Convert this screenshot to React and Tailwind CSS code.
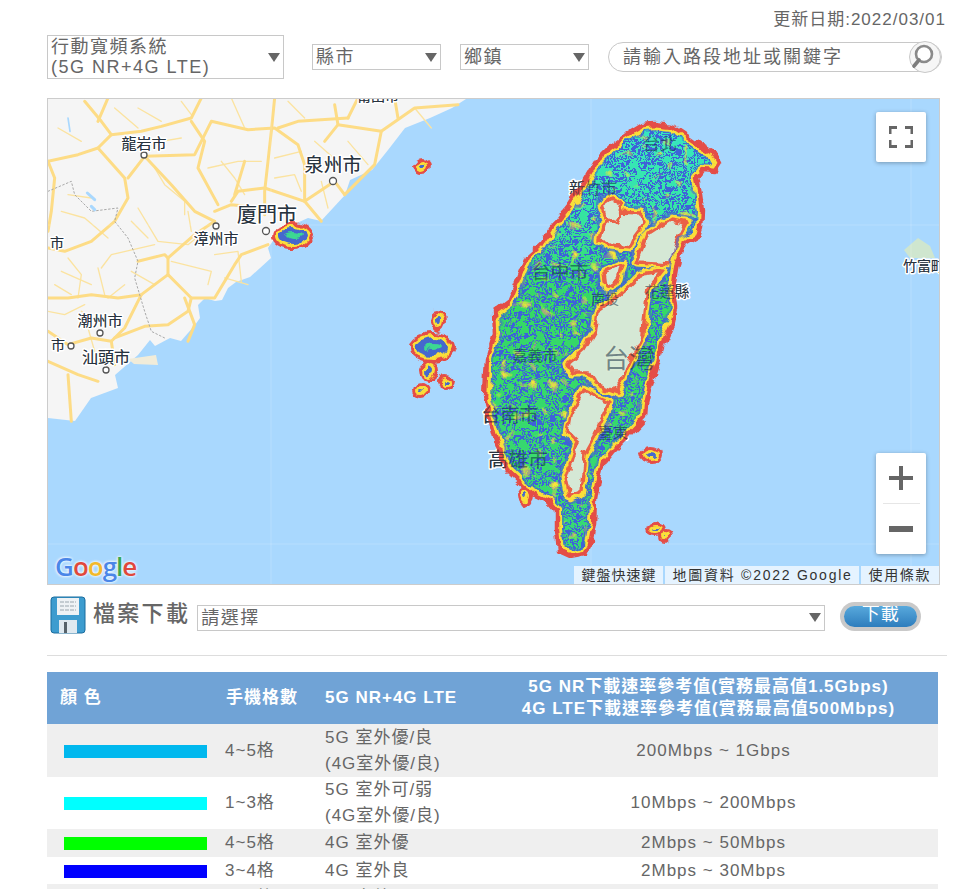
const FONT = "font-['Liberation_Sans','Noto_Sans_CJK_TC',sans-serif]";

// roads are traced in a 3x space over the map's top left corner
const MAJOR_ROADS = [
  "M110,10 L160,70 190,110 150,150 90,170 0,190",
  "M180,0 L150,70",
  "M150,150 L230,240 240,300 200,370 130,430 50,460 0,450",
  "M290,175 L240,240",
  "M290,175 L370,260 440,340 500,370",
  "M0,190 L20,240 10,340 0,400",
  "M290,175 L440,170 490,70 600,95 680,90 750,140 770,200 770,310",
  "M460,0 L430,60 340,85 280,100 190,110",
  "M430,70 L470,130 450,210 510,320",
  "M680,0 L670,100 650,280 650,350",
  "M550,310 L570,280 650,270 770,310 860,250 890,290",
  "M500,340 L550,320 650,330",
  "M900,60 L750,70 690,90",
  "M860,20 L870,80 830,130",
  "M500,370 L440,410 360,480 360,530 400,570 430,600 500,600 560,500 580,470 660,440",
  "M360,530 L280,590 230,690 190,730",
  "M200,720 L290,685 360,680 420,640 430,600",
  "M0,700 L60,740 130,720 190,730 200,800",
  "M0,790 L90,830 150,850",
  "M60,830 L70,970",
  "M0,600 L60,600 130,590 210,600 280,590",
  "M770,310 L820,370",
  "M270,490 L350,470 360,480",
  "M870,80 L1000,100 1100,30 1230,20",
  "M1000,100 L980,200 890,290",
  "M1050,60 L1040,0",
  "M900,60 L930,0",
  "M410,600 L440,680 420,730",
  "M590,190 L560,290",
];

const MINOR_ROADS = [
  "M270,30 L340,70", "M400,10 L430,50", "M550,0 L590,90", "M720,10 L770,60",
  "M320,210 L350,260 410,310 410,350", "M480,210 L570,190 640,190", "M520,190 L560,240 590,290",
  "M270,330 L330,430 420,440 470,400", "M60,480 L100,530 90,600", "M160,510 L190,470 320,440",
  "M150,510 L170,590", "M370,490 L490,520 480,560", "M500,470 L570,460 580,550", "M680,180 L760,160",
  "M680,240 L740,230 760,280", "M820,250 L840,330", "M40,340 L110,360 180,420",
  "M250,370 L300,420", "M0,640 L50,650 110,620", "M420,340 L430,400", "M120,690 L140,760",
  "M900,130 L960,200", "M800,130 L880,200", "M1100,30 L1150,90", "M40,520 L130,560", "M250,520 L320,560",
  "M30,90 L100,130", "M200,30 L270,90", "M340,130 L400,120", "M60,290 L130,300", "M580,380 L640,370",
  "M20,560 L70,590", "M180,600 L230,560", "M530,540 L600,560", "M100,640 L160,680",
];

const TW_OUTLINE = "M643,125 L655,124 L672,126 L690,138 L703,147 L712,152 L718,163 L713,171 L703,170 L697,178 L700,195 L702,210 L701,228 L699,234 L684,243 L678,258 L675,275 L673,290 L675,308 L672,323 L664,342 L657,365 L650,387 L646,405 L645,418 L627,437 L612,452 L603,463 L598,482 L595,500 L594,523 L590,545 L586,553 L570,556 L559,551 L557,530 L557,510 L550,502 L535,495 L523,485 L508,471 L500,452 L495,437 L490,418 L485,397 L486,375 L487,360 L495,333 L494,312 L510,300 L518,280 L527,257 L540,245 L553,227 L570,205 L587,177 L597,160 L610,147 L625,136 Z";

// patches of the central range with no coverage
const MOUNTAINS = [
  "M600,240 L603,226 L620,212 L640,213 L645,222 L636,234 L630,248 L612,246 Z",
  "M637,262 L647,235 L670,220 L687,223 L678,240 L672,264 Z",
  "M628,288 L642,274 L662,271 L648,288 L644,322 L643,334 L625,372 L617,392 L597,385 L588,372 L572,372 L567,365 L584,350 L594,333 L597,312 L614,300 Z",
  "M583,390 L610,402 L595,437 L585,455 L581,492 L570,497 L566,477 L577,442 L568,433 L571,416 Z",
  "M602,205 L612,198 L622,205 L616,222 L606,218 Z",
  "M604,272 L622,264 L618,280 L606,288 Z",
];

// off shore spots: [cx, cy, rx, ry]
const ISLETS = [
  [293, 236, 21, 14], [422, 166, 9, 8], [438, 321, 8, 11], [432, 347, 23, 15], [429, 371, 9, 11],
  [421, 390, 8, 7], [446, 382, 9, 8], [525, 496, 8, 9], [651, 455, 11, 8], [655, 529, 9, 7], [665, 536, 7, 7],
];

const LABELS = [
  { x: 144, y: 149, s: 15, t: "龍岩市" },
  { x: 333, y: 172, s: 19, t: "泉州市" },
  { x: 267, y: 222, s: 20, t: "廈門市" },
  { x: 216, y: 244, s: 15, t: "漳州市" },
  { x: 57, y: 248, s: 14, t: "市" },
  { x: 100, y: 326, s: 15, t: "潮州市" },
  { x: 58, y: 350, s: 14, t: "市" },
  { x: 106, y: 363, s: 16, t: "汕頭市" },
  { x: 378, y: 101, s: 14, t: "莆田市" },
  { x: 924, y: 271, s: 14, t: "竹富町" },
  { x: 593, y: 194, s: 16, t: "新竹市" },
  { x: 660, y: 150, s: 17, t: "台北" },
  { x: 560, y: 279, s: 19, t: "台中市" },
  { x: 667, y: 297, s: 15, t: "花蓮縣" },
  { x: 605, y: 304, s: 14, t: "南投" },
  { x: 629, y: 368, s: 26, t: "台灣" },
  { x: 535, y: 361, s: 15, t: "嘉義市" },
  { x: 510, y: 422, s: 19, t: "台南市" },
  { x: 518, y: 467, s: 20, t: "高雄市" },
  { x: 613, y: 438, s: 15, t: "臺東" },
];

const CITY_DOTS = [
  [144, 155, 3], [333, 181, 3.5], [266, 231, 3.5], [216, 226, 3], [100, 333, 3], [71, 346, 3], [106, 370, 3],
];

const RATES = [
  { color: "bg-[#00b8ee]", bars: "4~5格", net: ["5G 室外優/良", "(4G室外優/良)"], speed: "200Mbps ~ 1Gbps", row: "h-[53px]" },
  { color: "bg-[#00ffff]", bars: "1~3格", net: ["5G 室外可/弱", "(4G室外優/良)"], speed: "10Mbps ~ 200Mbps", row: "h-[52px]" },
  { color: "bg-[#00ff00]", bars: "4~5格", net: ["4G 室外優"], speed: "2Mbps ~ 50Mbps", row: "h-[28px]" },
  { color: "bg-[#0000ff]", bars: "3~4格", net: ["4G 室外良"], speed: "2Mbps ~ 30Mbps", row: "h-[27px]" },
  { color: "bg-[#ffff00]", bars: "2~3格", net: ["4G 室外可"], speed: "1Mbps ~ 10Mbps", row: "h-[28px]" },
];

const Caret = () => (
  <span className="w-0 h-0 border-x-[6px] border-x-transparent border-t-[9px] border-t-[#666]" />
);

const Dropdown = ({ className, children }) => (
  <div className={`flex items-center justify-between border border-[#c8c8c8] bg-white px-[3px] text-[18px] leading-[20px] tracking-[1.5px] text-[#666] ${className}`}>
    <div>{children}</div>
    <Caret />
  </div>
);

const SaveIcon = () => (
  <svg className="w-[36px] h-[38px]" viewBox="0 0 36 38">
    <rect x="1" y="1" width="34" height="36" rx="3" fill="#3d9ccf" stroke="#1b6c9e" strokeWidth="1" />
    <rect x="7" y="2" width="22" height="17" fill="#eef2f5" />
    <path d="M10 6h16M10 10h16M10 14h16" stroke="#9aa6ae" strokeWidth="1" strokeDasharray="4 1" />
    <rect x="9" y="24" width="18" height="13" fill="#dfe9f0" />
    <rect x="14" y="26" width="3" height="11" fill="#56626a" />
  </svg>
);

const SearchIcon = () => (
  <svg className="w-[32px] h-[32px]" viewBox="0 0 32 32">
    <circle cx="16" cy="16" r="15.5" fill="#f6f6f6" stroke="#c8c8c8" />
    <circle cx="15" cy="13" r="8" fill="#fff" stroke="#8a8a8a" strokeWidth="2.6" />
    <path d="M10 19 5 25" stroke="#7c7c7c" strokeWidth="3.6" strokeLinecap="round" />
  </svg>
);

const MapBase = () => (
  <svg className="block w-full h-full" viewBox="48 99 891 485">
    <defs>
      <clipPath id="tw">
        <path d={TW_OUTLINE} />
      </clipPath>
      <linearGradient id="cover" x1="0" y1="0" x2="0" y2="1">
        <stop offset="0" stopColor="#30e8c0" />
        <stop offset="0.2" stopColor="#2ee6a0" />
        <stop offset="0.4" stopColor="#2ed85c" />
        <stop offset="1" stopColor="#30d870" />
      </linearGradient>
      <filter id="blueNoise" x="0" y="0" width="100%" height="100%" colorInterpolationFilters="sRGB">
        <feTurbulence type="fractalNoise" baseFrequency="0.095" numOctaves="2" seed="7" />
        <feColorMatrix values="0 0 0 0 0.22  0 0 0 0 0.36  0 0 0 0 0.84  3 0 0 0 -1" />
        <feComponentTransfer>
          <feFuncA type="discrete" tableValues="0 0 1 1 0 0 1 1 0 0 1 1 0" />
        </feComponentTransfer>
        <feGaussianBlur stdDeviation="0.6" />
      </filter>
      <filter id="yellowNoise" x="0" y="0" width="100%" height="100%" colorInterpolationFilters="sRGB">
        <feTurbulence type="fractalNoise" baseFrequency="0.1" numOctaves="1" seed="21" />
        <feColorMatrix values="0 0 0 0 1  0 0 0 0 0.9  0 0 0 0 0.18  0 6 0 0 -3.75" />
        <feGaussianBlur stdDeviation="0.5" />
      </filter>
      <filter id="wiggle" filterUnits="userSpaceOnUse" x="48" y="99" width="891" height="485" colorInterpolationFilters="sRGB">
        <feTurbulence type="fractalNoise" baseFrequency="0.09" numOctaves="2" seed="11" result="n" />
        <feDisplacementMap in="SourceGraphic" in2="n" scale="9" xChannelSelector="R" yChannelSelector="G" />
        <feGaussianBlur stdDeviation="0.5" />
      </filter>
    </defs>

    <rect x="48" y="99" width="891" height="485" fill="#a9d8fe" />

    {/* mainland */}
    <path
      d="M48,99 L466,99 L452,108 L430,118 L405,128 L388,150 L372,170 L350,180 L345,195 L333,208 L321,221 L308,218 L290,226 L275,238 L268,248 L271,258 L250,277 L236,282 L228,288 L222,300 L215,301 L205,298 L198,305 L200,318 L195,325 L181,341 L170,338 L155,346 L150,340 L138,355 L115,375 L118,388 L91,398 L75,421 L48,418 Z"
      fill="#f5f5f5"
    />
    <path d="M128,359 L156,355 L158,365 L134,364 Z" fill="#f1ecd9" />
    <path d="M904,250 L918,238 L930,246 L935,258 L910,258 Z" fill="#cfe6cf" />

    <g transform="translate(48 98) scale(0.3333)" fill="none" strokeLinejoin="round" strokeLinecap="round">
      {MINOR_ROADS.map((d) => (
        <path key={d} d={d} stroke="#fbe3a0" strokeWidth="4" />
      ))}
      {MAJOR_ROADS.map((d) => (
        <path key={d} d={d} stroke="#fddc86" strokeWidth="9" />
      ))}
      <path d="M0,280 L70,250 80,290 130,340 210,330 200,370 240,420 270,490 260,540 290,640 310,700 350,720" stroke="#a8a8a8" strokeWidth="3" strokeDasharray="5 7" />
      <path d="M60,60 L66,100" stroke="#a9d8fe" strokeWidth="5" />
      <path d="M118,285 L140,305 M130,325 L140,335" stroke="#a9d8fe" strokeWidth="9" />
    </g>

    {/* faint tile seams */}
    <path d="M271 99V584M591 99V584M911 99V584M48 225H939M48 544H939" stroke="#fff" strokeOpacity="0.18" />

    {CITY_DOTS.map(([cx, cy, r]) => (
      <circle key={`${cx}-${cy}`} cx={cx} cy={cy} r={r} fill="#fff" stroke="#555" strokeWidth="1.3" />
    ))}

    {LABELS.map((l) => (
      <text
        key={l.t + l.x}
        x={l.x}
        y={l.y}
        fontSize={l.s}
        textAnchor="middle"
        fill="#3c3c3c"
        stroke="#fff"
        strokeWidth="3"
        strokeLinejoin="round"
        paintOrder="stroke"
        fontFamily="'Noto Sans CJK TC', sans-serif"
      >
        {l.t}
      </text>
    ))}

    {/* coverage overlay */}
    <g opacity="0.94" filter="url(#wiggle)">
      {ISLETS.map(([cx, cy, rx, ry]) => (
        <ellipse key={`r${cx}${cy}`} cx={cx} cy={cy} rx={rx} ry={ry} fill="#e8453c" />
      ))}
      {ISLETS.map(([cx, cy, rx, ry]) => (
        <ellipse key={`y${cx}${cy}`} cx={cx} cy={cy} rx={Math.max(rx - 3, 1)} ry={Math.max(ry - 3, 1)} fill="#ffe02e" />
      ))}
      {ISLETS.map(([cx, cy, rx, ry]) => (
        <ellipse key={`b${cx}${cy}`} cx={cx} cy={cy} rx={Math.max(rx - 6, 1)} ry={Math.max(ry - 6, 1)} fill="#3f62cc" />
      ))}
      <ellipse cx="293" cy="235" rx="9" ry="3" fill="#36d98c" />
      <ellipse cx="433" cy="347" rx="8" ry="3" fill="#36d98c" />

      <g clipPath="url(#tw)">
        <rect x="480" y="120" width="245" height="440" fill="url(#cover)" />
        <rect x="480" y="120" width="245" height="440" filter="url(#blueNoise)" />
        <rect x="480" y="120" width="245" height="440" filter="url(#yellowNoise)" />
        <g strokeLinejoin="round">
          {MOUNTAINS.map((d) => (
            <path key={`b${d}`} d={d} fill="none" stroke="#3f62cc" strokeWidth="14" opacity="0.7" />
          ))}
          {MOUNTAINS.map((d) => (
            <path key={`y${d}`} d={d} fill="none" stroke="#ffe02e" strokeWidth="9" />
          ))}
          {MOUNTAINS.map((d) => (
            <path key={`o${d}`} d={d} fill="#d8e9d3" stroke="#ef5a3c" strokeWidth="3.5" />
          ))}
        </g>
        <path d={TW_OUTLINE} fill="none" stroke="#3f62cc" strokeWidth="14" opacity="0.6" />
        <path d={TW_OUTLINE} fill="none" stroke="#ffe02e" strokeWidth="10" />
      </g>
      <path d={TW_OUTLINE} fill="none" stroke="#e8453c" strokeWidth="4.5" strokeLinejoin="round" />
    </g>

    {/* place names show through the overlay */}
    {LABELS.map((l) => (
      <text
        key={`over${l.t}${l.x}`}
        x={l.x}
        y={l.y}
        fontSize={l.s}
        textAnchor="middle"
        fill="#102a43"
        fillOpacity="0.5"
        fontFamily="'Noto Sans CJK TC', sans-serif"
      >
        {l.t}
      </text>
    ))}
  </svg>
);

const MapPanel = () => (
  <div className="relative h-[487px] border border-[#ccc] overflow-hidden">
    <MapBase />

    <button className="absolute top-[13px] right-[13px] w-[50px] h-[50px] flex items-center justify-center rounded-[2px] bg-white shadow-[0_1px_4px_rgba(0,0,0,0.3)]">
      <svg className="w-[24px] h-[22px]" viewBox="0 0 24 22" fill="none" stroke="#666" strokeWidth="3">
        <path d="M1 8V1.5H8M16 1.5H23V8M1 14V20.5H8M16 20.5H23V14" />
      </svg>
    </button>

    <div className="absolute top-[354px] right-[13px] w-[50px] h-[101px] flex flex-col items-center rounded-[2px] bg-white shadow-[0_1px_4px_rgba(0,0,0,0.3)]">
      <button className="h-[50px] w-full flex items-center justify-center">
        <svg className="w-[24px] h-[24px]" viewBox="0 0 24 24" fill="#666">
          <path d="M10 0h4v10h10v4H14v10h-4V14H0v-4h10z" />
        </svg>
      </button>
      <div className="w-[37px] h-px bg-[#e6e6e6]" />
      <button className="h-[50px] w-full flex items-center justify-center">
        <svg className="w-[24px] h-[6px]" viewBox="0 0 24 6" fill="#666">
          <rect width="24" height="6" />
        </svg>
      </button>
    </div>

    <div className="absolute left-[7px] bottom-[3px] flex font-['Open_Sans',sans-serif] text-[26px] leading-[30px] font-semibold tracking-[-1px] [text-shadow:0_0_3px_#fff,0_0_3px_#fff]">
      <span className="text-[#4a86e8]">G</span>
      <span className="text-[#e0483c]">o</span>
      <span className="text-[#f2b92c]">o</span>
      <span className="text-[#4a86e8]">g</span>
      <span className="text-[#35a853]">l</span>
      <span className="text-[#e0483c]">e</span>
    </div>

    <div className="absolute right-0 bottom-0 h-[18px] flex text-[14px] leading-[18px] text-[#333]">
      <span className="bg-white/70 tracking-[1px] pl-[7px] pr-[7px] mr-[2px]">鍵盤快速鍵</span>
      <span className="bg-white/70 tracking-[1.75px] pl-[7px] pr-[6px] mr-[2px]">地圖資料 ©2022 Google</span>
      <span className="bg-white/70 tracking-[1.6px] pl-[8px] pr-[8px]">使用條款</span>
    </div>
  </div>
);

const RateTable = () => (
  <table className="w-[891px] border-collapse table-fixed text-[17px] tracking-[1px] text-[#666]">
    <colgroup>
      <col className="w-[177px]" />
      <col className="w-[100px]" />
      <col className="w-[155px]" />
      <col />
    </colgroup>
    <thead>
      <tr className="h-[52px] bg-[#70a3d6] text-white font-bold leading-[22px]">
        <th className="pl-[13px] text-left font-bold">顏 色</th>
        <th className="pl-[2px] text-left font-bold">手機格數</th>
        <th className="pl-[1px] text-left font-bold">5G NR+4G LTE</th>
        <th className="font-bold">
          5G NR下載速率參考值(實務最高值1.5Gbps)
          <br />
          4G LTE下載速率參考值(實務最高值500Mbps)
        </th>
      </tr>
    </thead>
    <tbody>
      {RATES.map((r, i) => (
        <tr key={r.color} className={`${i % 2 === 0 ? "bg-[#efefef]" : "bg-white"} ${r.row} leading-[26px]`}>
          <td className="pl-[17px]">
            <div className={`w-[143px] h-[13px] mt-px ${r.color}`} />
          </td>
          <td className="pl-[1px]">{r.bars}</td>
          <td className="pl-[1px]">
            {r.net.map((line) => (
              <div key={line}>{line}</div>
            ))}
          </td>
          <td className="text-center pl-[10px]">{r.speed}</td>
        </tr>
      ))}
    </tbody>
  </table>
);

export default function App() {
  return (
    <div className={`h-[889px] overflow-hidden bg-white ${FONT} text-[#666]`}>
      <div className="w-[900px] ml-[47px]">
        <div className="h-[35px] flex items-end justify-end text-[17px] leading-[24px] tracking-[1px] pb-[3px] pr-[1px]">
          更新日期:2022/03/01
        </div>

        <div className="h-[44px] flex items-center">
          <Dropdown className="w-[237px] h-[44px]">
            行動寬頻系統
            <br />
            (5G NR+4G LTE)
          </Dropdown>
          <Dropdown className="w-[129px] h-[26px] ml-[28px]">縣市</Dropdown>
          <Dropdown className="w-[129px] h-[26px] ml-[19px]">鄉鎮</Dropdown>
          <div className="w-[334px] h-[30px] ml-[19px] flex items-center justify-between rounded-full border border-[#c8c8c8] pl-[14px] text-[18px] tracking-[2px]">
            請輸入路段地址或關鍵字
            <SearchIcon />
          </div>
        </div>

        <div className="w-[893px] mt-[19px]">
          <MapPanel />
        </div>

        <div className="h-[70px] flex items-center pb-[10px] pl-[3px]">
          <SaveIcon />
          <div className="ml-[7px] text-[22px] leading-[28px] tracking-[2.3px] font-medium -mt-[2px]">檔案下載</div>
          <Dropdown className="w-[628px] h-[26px] ml-[7px] mt-[5px]">請選擇</Dropdown>
          <div className="ml-[15px] w-[81px] h-[29px] rounded-full bg-[#c9c9c9] p-[4px] mt-[3px]">
            <div className="h-[21px] rounded-full bg-gradient-to-b from-[#58a9dc] to-[#2d7dbd] text-center text-white text-[18px] leading-[16px] tracking-[1px] overflow-hidden">
              下載
            </div>
          </div>
        </div>

        <hr className="border-0 h-px bg-[#ddd]" />

        <div className="mt-[16px]">
          <RateTable />
        </div>
      </div>
    </div>
  );
}
